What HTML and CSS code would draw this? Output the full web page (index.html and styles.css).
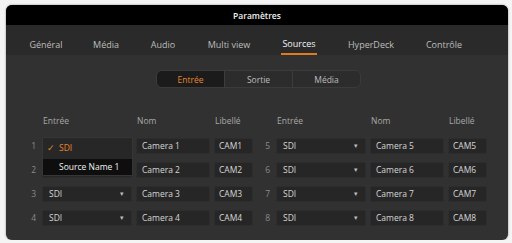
FILE: index.html
```html
<!DOCTYPE html>
<html lang="fr">
<head>
<meta charset="utf-8">
<link rel="stylesheet" href="styles.css">
</head>
<body>
<div class="window">
  <div class="titlebar">Paramètres</div>
  <div class="tabs">
    <span class="tab">Général</span>
    <span class="tab">Média</span>
    <span class="tab">Audio</span>
    <span class="tab">Multi view</span>
    <span class="tab active"><span class="tab-label">Sources</span></span>
    <span class="tab">HyperDeck</span>
    <span class="tab">Contrôle</span>
  </div>
  <div class="content">
    <div class="segmented">
      <span class="seg active">Entrée</span>
      <span class="seg">Sortie</span>
      <span class="seg">Média</span>
    </div>
    <div class="table">
      <span></span><span class="hd">Entrée</span><span class="hd">Nom</span><span class="hd">Libellé</span>
      <span></span><span class="hd">Entrée</span><span class="hd">Nom</span><span class="hd">Libellé</span>

      <span class="num">1</span>
      <div class="dd open">
        <div class="popup">
          <div class="opt sel"><span class="check">✓</span>SDI</div>
          <div class="opt hi">Source Name 1</div>
        </div>
      </div>
      <span class="field">Camera 1</span><span class="field lbl">CAM1</span>
      <span class="num">5</span>
      <div class="dd"><span>SDI</span><span class="arrow">▾</span></div>
      <span class="field">Camera 5</span><span class="field lbl">CAM5</span>

      <span class="num">2</span>
      <div class="dd covered"></div>
      <span class="field">Camera 2</span><span class="field lbl">CAM2</span>
      <span class="num">6</span>
      <div class="dd"><span>SDI</span><span class="arrow">▾</span></div>
      <span class="field">Camera 6</span><span class="field lbl">CAM6</span>

      <span class="num">3</span>
      <div class="dd"><span>SDI</span><span class="arrow">▾</span></div>
      <span class="field">Camera 3</span><span class="field lbl">CAM3</span>
      <span class="num">7</span>
      <div class="dd"><span>SDI</span><span class="arrow">▾</span></div>
      <span class="field">Camera 7</span><span class="field lbl">CAM7</span>

      <span class="num">4</span>
      <div class="dd"><span>SDI</span><span class="arrow">▾</span></div>
      <span class="field">Camera 4</span><span class="field lbl">CAM4</span>
      <span class="num">8</span>
      <div class="dd"><span>SDI</span><span class="arrow">▾</span></div>
      <span class="field">Camera 8</span><span class="field lbl">CAM8</span>
    </div>
  </div>
</div>
</body>
</html>
```

FILE: styles.css
```css
html, body {
  margin: 0;
  padding: 0;
  background: #f4f4f4;
}
body {
  font-family: "Open Sans", "Noto Sans", sans-serif;
  font-size: 8.5px;
  color: #c8c8c8;
}
.window {
  margin: 5px 0 0 6px;
  width: 502px;
  height: 235px;
  border-radius: 6px;
  overflow: hidden;
  background: #313131;
  box-shadow: 0 0 2px rgba(0,0,0,0.5);
  display: flex;
  flex-direction: column;
}
.titlebar {
  height: 20px;
  background: #000;
  color: #f0f0f0;
  font-weight: 600;
  font-size: 8.5px;
  display: flex;
  align-items: center;
  justify-content: center;
}
.tabs {
  height: 30px;
  background: #2a2a2a;
  display: grid;
  grid-template-columns: 60px 60px 54px 78px 62px 82px 64px;
  padding-left: 10px;
  box-sizing: border-box;
}
.tab {
  color: #bdbdbd;
  display: flex;
  justify-content: center;
  align-items: center;
  padding-top: 8px;
  font-size: 9px;
}
.tab.active {
  color: #f2f2f2;
  align-items: stretch;
}
.tab-label {
  display: flex;
  align-items: center;
  padding: 0 1px;
  border-bottom: 2px solid #e07a20;
}
.content {
  flex: 1;
  display: flex;
  flex-direction: column;
  align-items: flex-start;
}
.segmented {
  align-self: center;
  margin-top: 15px;
  margin-left: 3px;
  display: flex;
  height: 18px;
  border: 1px solid #3b3b3b;
  border-radius: 6px;
  overflow: hidden;
  box-sizing: border-box;
}
.seg {
  width: 67px;
  display: flex;
  align-items: center;
  justify-content: center;
  background: #2c2c2c;
  color: #bdbdbd;
  border-left: 1px solid #3d3d3d;
}
.seg:first-child {
  border-left: none;
}
.seg.active {
  background: #1b1b1b;
  color: #e8862c;
}
.table {
  margin-top: 26px;
  margin-left: 22px;
  display: grid;
  grid-template-columns: 10px 90px 74px 39px 15px 90px 74px 39px;
  grid-template-rows: 16px repeat(4, 16px);
  column-gap: 4px;
  row-gap: 8px;
}
.hd {
  color: #a8a8a8;
  line-height: 14px;
  padding-left: 1px;
}
.num {
  text-align: right;
  padding-right: 2px;
  line-height: 16px;
  color: #8a8a8a;
}
.dd, .field {
  background: #262626;
  border: 1px solid #2d2d2d;
  border-radius: 2px;
  box-sizing: border-box;
  line-height: 14px;
  color: #d6d6d6;
}
.dd {
  display: flex;
  justify-content: space-between;
  padding: 0 6px;
  position: relative;
}
.arrow {
  font-size: 7px;
  color: #bcbcbc;
  padding-right: 1px;
}
.field {
  padding-left: 5px;
}
.field.lbl {
  padding-left: 4px;
}
.popup {
  position: absolute;
  left: -1px;
  top: -2px;
  width: 91px;
  height: 39px;
  background: #272727;
  border: 1px solid #363636;
  border-radius: 2px;
  box-sizing: border-box;
  padding-top: 2px;
  z-index: 2;
}
.opt {
  height: 16px;
  line-height: 16px;
  padding-left: 4px;
}
.opt.sel {
  color: #e8862c;
}
.check {
  margin-right: 4px;
}
.opt.hi {
  margin-top: 3px;
  background: #0e0e0e;
  color: #f2f2f2;
  padding-left: 16px;
}
```
